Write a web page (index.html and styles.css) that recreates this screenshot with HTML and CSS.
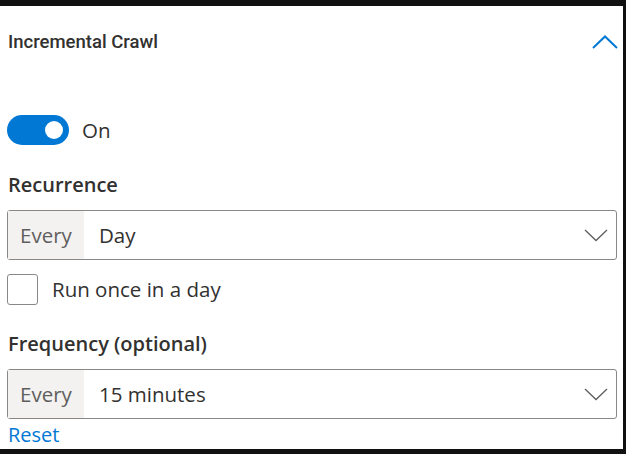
FILE: index.html
```html
<!DOCTYPE html>
<html lang="en">
<head>
  <meta charset="UTF-8">
  <title>Incremental Crawl</title>
  <link rel="stylesheet" href="styles.css">
</head>
<body>
  <div class="frame">
    <div class="header">
      <span class="title">Incremental Crawl</span>
      <svg class="chevron-up" width="26" height="14" viewBox="0 0 26 14">
        <path d="M1 13 L13 1.5 L25 13" fill="none" stroke="#0078d4" stroke-width="2"/>
      </svg>
    </div>

    <div class="toggle-row">
      <span class="toggle"><span class="knob"></span></span>
      <span class="toggle-text">On</span>
    </div>

    <div class="label">Recurrence</div>
    <div class="dropdown">
      <span class="prefix">Every</span>
      <span class="value">Day</span>
      <svg class="chevron-down" width="24" height="13" viewBox="0 0 24 13">
        <path d="M1 1 L12 11.5 L23 1" fill="none" stroke="#605e5c" stroke-width="1.3"/>
      </svg>
    </div>

    <div class="check-row">
      <span class="checkbox"></span>
      <span class="check-text">Run once in a day</span>
    </div>

    <div class="label">Frequency (optional)</div>
    <div class="dropdown">
      <span class="prefix">Every</span>
      <span class="value">15 minutes</span>
      <svg class="chevron-down" width="24" height="13" viewBox="0 0 24 13">
        <path d="M1 1 L12 11.5 L23 1" fill="none" stroke="#605e5c" stroke-width="1.3"/>
      </svg>
    </div>

    <a class="reset" href="#">Reset</a>
  </div>
</body>
</html>
```

FILE: styles.css
```css
body {
  margin: 0;
  background: #111;
  font-family: "Open Sans", "Noto Sans", sans-serif;
  color: #323130;
}
.frame {
  width: 626px;
  height: 454px;
  box-sizing: border-box;
  border-top: 6px solid #111;
  border-right: 3px solid #111;
  border-bottom: 5px solid #111;
  background: #fff;
  padding: 0 6px 0 7px;
}
.header {
  height: 72px;
  display: flex;
  align-items: center;
  justify-content: space-between;
}
.title {
  font-family: Roboto, "Open Sans", sans-serif;
  font-size: 18.5px;
  font-weight: 500;
  padding-left: 1px;
}
.chevron-up {
  margin-right: -1px;
}
.toggle-row {
  margin-top: 37px;
  height: 30px;
  display: flex;
  align-items: center;
  gap: 13px;
}
.toggle {
  width: 62px;
  height: 30px;
  box-sizing: border-box;
  border-radius: 15px;
  background: #0078d4;
  display: flex;
  align-items: center;
  justify-content: flex-end;
  padding-right: 6px;
}
.knob {
  width: 18px;
  height: 18px;
  border-radius: 50%;
  background: #fff;
}
.toggle-text {
  font-size: 20.5px;
}
.label {
  margin-top: 25px;
  height: 30px;
  line-height: 30px;
  font-size: 20px;
  font-weight: 600;
  padding-left: 1px;
}
.dropdown {
  margin-top: 10px;
  height: 50px;
  box-sizing: border-box;
  border: 1.5px solid #8a8886;
  border-radius: 3px;
  display: flex;
  align-items: stretch;
  font-size: 20.5px;
}
.prefix {
  width: 76px;
  background: #f3f2f1;
  color: #605e5c;
  display: flex;
  align-items: center;
  justify-content: center;
}
.value {
  flex: 1;
  display: flex;
  align-items: center;
  padding-left: 15px;
}
.chevron-down {
  align-self: center;
  margin-right: 8px;
}
.check-row {
  margin-top: 14px;
  height: 30px;
  display: flex;
  align-items: center;
  gap: 14px;
}
.checkbox {
  width: 31px;
  height: 31px;
  box-sizing: border-box;
  border: 1.5px solid #8a8886;
  border-radius: 3px;
}
.check-text {
  font-size: 20.5px;
}
.reset {
  display: block;
  margin-top: 5px;
  height: 22px;
  line-height: 22px;
  font-size: 20px;
  color: #0078d4;
  text-decoration: none;
  padding-left: 1px;
}
```
